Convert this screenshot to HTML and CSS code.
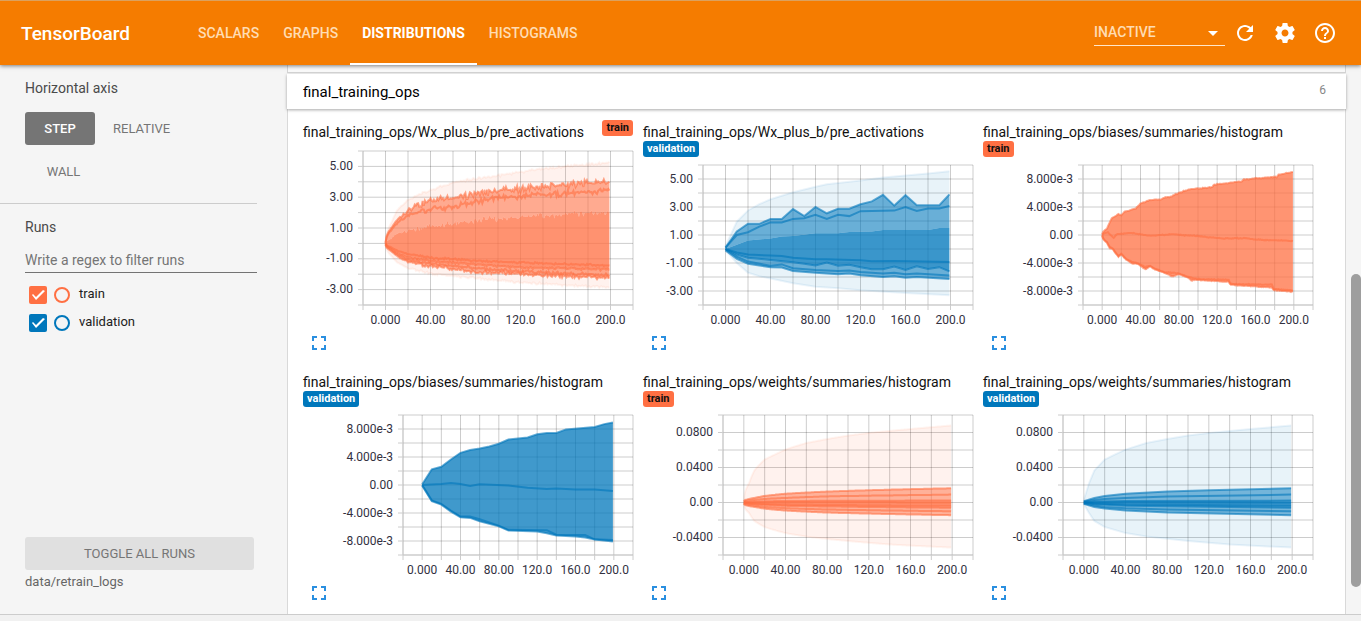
FILE: index.html
```html
<!DOCTYPE html>
<html lang="en">
<head>
<meta charset="utf-8">
<title>TensorBoard</title>
<link rel="stylesheet" href="styles.css">
</head>
<body>
<header class="toolbar">
  <h1 class="brand">TensorBoard</h1>
  <nav class="tabs">
    <a class="tab" href="#scalars">SCALARS</a>
    <a class="tab" href="#graphs">GRAPHS</a>
    <a class="tab active" href="#distributions">DISTRIBUTIONS</a>
    <a class="tab" href="#histograms">HISTOGRAMS</a>
  </nav>
  <div class="picker">
    <select class="picker-select" aria-label="Inactive dashboards"><option>INACTIVE</option></select>
    <svg class="picker-arrow" viewBox="0 0 10 5" aria-hidden="true"><path d="M0 0h10L5 5z"/></svg>
  </div>
  <button class="icon-button" aria-label="Reload"><svg viewBox="0 0 24 24"><path d="M17.65 6.35C16.2 4.9 14.21 4 12 4c-4.42 0-7.99 3.58-7.99 8s3.57 8 7.99 8c3.73 0 6.84-2.55 7.73-6h-2.08c-.82 2.33-3.04 4-5.65 4-3.31 0-6-2.69-6-6s2.69-6 6-6c1.66 0 3.14.69 4.22 1.78L13 11h7V4l-2.35 2.35z"/></svg></button>
  <button class="icon-button" aria-label="Settings"><svg viewBox="0 0 24 24"><path d="M19.43 12.98c.04-.32.07-.64.07-.98s-.03-.66-.07-.98l2.11-1.65c.19-.15.24-.42.12-.64l-2-3.46c-.12-.22-.39-.3-.61-.22l-2.49 1c-.52-.4-1.08-.73-1.69-.98l-.38-2.65C14.46 2.18 14.25 2 14 2h-4c-.25 0-.46.18-.49.42l-.38 2.65c-.61.25-1.17.59-1.69.98l-2.49-1c-.23-.09-.49 0-.61.22l-2 3.46c-.13.22-.07.49.12.64l2.11 1.65c-.04.32-.07.65-.07.98s.03.66.07.98l-2.11 1.65c-.19.15-.24.42-.12.64l2 3.46c.12.22.39.3.61.22l2.49-1c.52.4 1.08.73 1.69.98l.38 2.65c.03.24.24.42.49.42h4c.25 0 .46-.18.49-.42l.38-2.65c.61-.25 1.17-.59 1.69-.98l2.49 1c.23.09.49 0 .61-.22l2-3.46c.12-.22.07-.49-.12-.64l-2.11-1.65zM12 15.5c-1.93 0-3.5-1.57-3.5-3.5s1.57-3.5 3.5-3.5 3.5 1.57 3.5 3.5-1.57 3.5-3.5 3.5z"/></svg></button>
  <button class="icon-button" aria-label="Help"><svg viewBox="0 0 24 24"><path d="M11 18h2v-2h-2v2zm1-16C6.48 2 2 6.48 2 12s4.48 10 10 10 10-4.48 10-10S17.52 2 12 2zm0 18c-4.41 0-8-3.59-8-8s3.59-8 8-8 8 3.59 8 8-3.59 8-8 8zm0-14c-2.21 0-4 1.79-4 4h2c0-1.1.9-2 2-2s2 .9 2 2c0 2-3 1.75-3 5h2c0-2.25 3-2.5 3-5 0-2.21-1.79-4-4-4z"/></svg></button>
</header>
<div class="workspace">
  <aside class="sidebar">
    <section class="axis-section">
      <h2 class="side-title">Horizontal axis</h2>
      <div class="axis-buttons">
        <button class="axis-button selected">STEP</button>
        <button class="axis-button">RELATIVE</button>
        <button class="axis-button wide">WALL</button>
      </div>
    </section>
    <section class="runs-section">
      <h2 class="side-title">Runs</h2>
      <input class="run-filter" type="text" placeholder="Write a regex to filter runs" aria-label="Run filter">
      <div class="run train">
        <input class="run-check" type="checkbox" id="run-train" checked>
        <button class="run-dot" aria-label="Only train"></button>
        <label for="run-train">train</label>
      </div>
      <div class="run validation">
        <input class="run-check" type="checkbox" id="run-validation" checked>
        <button class="run-dot" aria-label="Only validation"></button>
        <label for="run-validation">validation</label>
      </div>
    </section>
    <footer class="side-footer">
      <button class="toggle-all">TOGGLE ALL RUNS</button>
      <div class="logdir">data/retrain_logs</div>
    </footer>
  </aside>
  <main class="center">
    <div class="previous-pane"></div>
    <section class="pane">
      <header class="pane-header"><h2 class="pane-title">final_training_ops</h2><span class="pane-count">6</span></header>
      <div class="cards" id="cards"></div>
    </section>
  </main>
  <div class="scroll-track"><div class="scroll-thumb"></div></div>
</div>
<script src="app.js"></script>
</body>
</html>
```

FILE: styles.css
```css
* { box-sizing: border-box; }
body {
  margin: 0;
  min-height: 100vh;
  display: flex;
  flex-direction: column;
  padding-bottom: 6px;
  background: #f1f1f1;
  font-family: Roboto, "Liberation Sans", sans-serif;
  font-size: 14px;
  color: #212121;
}
h1, h2 { margin: 0; font-weight: 400; }
button { font: inherit; border: 0; padding: 0; background: none; cursor: pointer; }

.toolbar {
  position: relative;
  z-index: 2;
  height: 65px;
  flex: none;
  display: flex;
  align-items: center;
  padding: 0 24px 0 21px;
  background: #f57c00;
  border-top: 1px solid #dba15e;
  box-shadow: 0 1px 4px rgba(0, 0, 0, .5);
  color: #fff;
}
.brand { width: 165px; font-size: 19px; font-weight: 500; }
.tabs { display: flex; align-self: stretch; margin-right: auto; }
.tab {
  display: flex;
  align-items: center;
  padding: 2px 12px 0;
  border-bottom: 2px solid transparent;
  color: #ffdcb3;
  font-weight: 500;
  text-decoration: none;
}
.tab.active { color: #fff; font-weight: 700; border-color: #fff; }
.picker { position: relative; margin-right: 8px; }
.picker-select {
  appearance: none;
  width: 131px;
  height: 26px;
  padding: 0 0 1px;
  border: 0;
  border-bottom: 1px solid #ffe6c9;
  border-radius: 0;
  background: none;
  color: #ffdcb3;
  font: 500 14px Roboto, sans-serif;
}
.picker-arrow { position: absolute; right: 7px; top: 11px; width: 10px; height: 5px; fill: #fff; }
.icon-button { width: 24px; height: 24px; margin-right: 16px; }
.icon-button:last-child { margin-right: 0; }
.icon-button svg { display: block; fill: #fff; }

.workspace { flex: 1; display: flex; border-bottom: 1px solid #ccc; background: #f5f5f5; }
.sidebar {
  width: 287px;
  flex: none;
  display: flex;
  flex-direction: column;
  padding: 15px 30px 24px 0;
}
.side-title { font-size: 14px; line-height: 16px; color: #4a4a4a; }
.axis-section { padding: 0 0 15px 25px; border-bottom: 1px solid #ccc; }
.axis-buttons { display: flex; flex-wrap: wrap; gap: 10px 4px; margin-top: 16px; }
.axis-button { height: 33px; min-width: 70px; padding: 0 14px; border-radius: 3px; color: #757575; font-size: 13px; }
.axis-button.selected { background: #757575; color: #fff; font-weight: 500; }
.axis-button.wide { min-width: 77px; }
.runs-section { padding: 15px 0 0 25px; }
.run-filter {
  display: block;
  width: 100%;
  height: 26px;
  margin: 12px 0 13px;
  padding: 0;
  border: 0;
  border-bottom: 1px solid #737373;
  background: none;
  font: 14px Roboto, sans-serif;
}
.run-filter::placeholder { color: #757575; opacity: 1; }
.run { display: flex; align-items: center; height: 18px; margin: 0 0 10px 4px; font-size: 13px; }
.train { --run: #ff7043; }
.validation { --run: #0077bb; }
.run-check { appearance: none; width: 18px; height: 18px; margin: 0; border-radius: 2px; background: var(--run); }
.run-check::before {
  content: "";
  display: block;
  width: 18px;
  height: 18px;
  background: #fff;
  clip-path: polygon(3px 9px, 4px 8px, 7px 11px, 14px 4px, 16px 5px, 7px 14px);
}
.run-dot { width: 16px; height: 16px; margin: 0 9px 0 7px; border: 2px solid var(--run); border-radius: 50%; }
.run label { line-height: 15px; padding-bottom: 3px; }
.side-footer { margin-top: auto; padding-left: 25px; }
.toggle-all { display: block; width: 229px; height: 33px; border-radius: 3px; background: #e0e0e0; color: #757575; font-size: 13px; }
.logdir { margin-top: 4px; font-size: 13px; line-height: 16px; color: #666; }

.center { flex: 1; min-width: 0; display: flex; flex-direction: column; }
.previous-pane { height: 8px; border: 1px solid #d5d5d5; border-top: 0; background: #fafafa; }
.pane { flex: 1; margin-top: 1px; background: #fff; border: solid #d9d9d9; border-width: 0 1px; }
.pane-header {
  display: flex;
  justify-content: space-between;
  height: 35px;
  margin: 0 -1px;
  padding: 0 20px 0 16px;
  background: #fff;
  box-shadow: 0 1px 3px rgba(0, 0, 0, .35);
  color: #000;
}
.pane-title { font-size: 15px; line-height: 36px; }
.pane-count { font-size: 12px; line-height: 32px; color: #888; }
.cards { display: grid; grid-template-columns: repeat(auto-fill, 330px); gap: 15px 10px; padding: 11px 15px 8px; }
.card { display: flex; flex-direction: column; }
.card-header { display: flex; flex-wrap: wrap; justify-content: space-between; align-items: flex-start; }
.card-title { padding-top: 3px; font-size: 14px; line-height: 18px; color: #111; }
.chip { padding: 0 4px; border-radius: 3px; background: var(--run); font-size: 11px; font-weight: 700; line-height: 16px; }
.train .chip { color: #111; }
.validation .chip { color: #fff; }
.chart { display: block; width: 330px; margin-top: auto; overflow: visible; }
.grid line { stroke: #000; stroke-opacity: .2; }
.axis line { stroke: #ccc; }
.axis text { font-size: 12px; fill: #32313f; }
.bands { fill: var(--run); }
.quantiles { fill: none; stroke: var(--run); stroke-width: 2; }
.expand { width: 24px; height: 24px; margin: 1px 0 0 4px; }
.expand svg { display: block; fill: #2a8fe0; }

.scroll-track { position: relative; width: 15px; flex: none; }
.scroll-thumb { position: absolute; right: 0; top: 38%; bottom: 5%; width: 10px; border-radius: 5px; background: #9e9e9e; }
```

FILE: app.js
```
// Each curve is a list of step, value pairs. Curves run from the highest quantile to the lowest.
const charts = [
  { tag: "Wx_plus_b/pre_activations", run: "train", left: 60, height: 154, lo: -4, hi: 6,
    labels: [[5, "5.00"], [3, "3.00"], [1, "1.00"], [-1, "-1.00"], [-3, "-3.00"]], step: 1, dense: true,
    noise: [.05, .15, .12, .15, .04, .05, .06, .08, .05],
    curves: [
      [0, .1, 5, 1.3, 10, 2.1, 20, 2.8, 30, 3.2, 40, 3.45, 60, 3.95, 80, 4.2, 100, 4.4, 120, 4.65, 160, 5, 199, 5.25],
      [0, .05, 5, 1, 10, 1.5, 20, 2.15, 30, 2.5, 40, 2.75, 60, 2.95, 80, 3.2, 100, 3.4, 120, 3.55, 160, 3.8, 199, 4],
      [0, 0, 5, .85, 10, 1.3, 20, 1.75, 30, 2.05, 40, 2.2, 60, 2.4, 80, 2.7, 100, 2.95, 120, 3.05, 160, 3.25, 199, 3.45],
      [0, 0, 5, .3, 10, .6, 20, .85, 40, 1.1, 60, 1.3, 80, 1.5, 100, 1.6, 120, 1.7, 160, 1.9, 199, 2.05],
      [0, 0, 5, -.25, 10, -.45, 20, -.7, 40, -.93, 80, -1.12, 120, -1.25, 199, -1.43],
      [0, 0, 5, -.35, 10, -.6, 20, -.9, 40, -1.15, 80, -1.35, 120, -1.55, 199, -1.7],
      [0, 0, 5, -.4, 10, -.7, 20, -1.05, 40, -1.3, 80, -1.6, 120, -1.82, 199, -2.05],
      [0, -.1, 5, -.5, 10, -.8, 20, -1.2, 40, -1.45, 80, -1.85, 120, -1.98, 199, -2.25],
      [0, -.1, 5, -.8, 10, -1.2, 20, -1.6, 40, -1.95, 80, -2.25, 120, -2.55, 199, -2.85]],
    bands: [[0, 8, .09], [1, 3, .55], [3, 5, .74], [5, 7, .6]], strong: [1, 2, 4, 5, 6, 7] },

  { tag: "Wx_plus_b/pre_activations", run: "validation", left: 60, height: 140, lo: -4, hi: 6,
    labels: [[5, "5.00"], [3, "3.00"], [1, "1.00"], [-1, "-1.00"], [-3, "-3.00"]], step: 1,
    curves: [
      [0, .2, 10, 1.95, 20, 2.75, 30, 3.2, 40, 3.55, 60, 4.05, 80, 4.45, 90, 4.62, 120, 4.9, 140, 5.1, 160, 5.25, 180, 5.4, 199, 5.55],
      [0, .1, 10, 1.25, 20, 1.8, 30, 1.8, 40, 2.15, 50, 2.15, 60, 2.85, 70, 2.35, 80, 3, 90, 2.55, 100, 2.87, 110, 2.87, 120, 3.2, 130, 3.4, 140, 3.87, 150, 3.1, 160, 3.85, 170, 3.13, 190, 3.13, 199, 3.9],
      [0, .1, 10, 1, 20, 1.2, 30, 1.6, 40, 1.9, 50, 1.9, 60, 2.15, 70, 2.2, 80, 2.45, 90, 2.15, 100, 2.45, 110, 2.35, 120, 2.7, 150, 2.74, 160, 3, 170, 2.72, 180, 2.9, 190, 2.9, 199, 3.07],
      [0, 0, 10, .3, 20, .6, 40, .75, 50, .9, 60, .93, 80, 1.13, 100, 1.13, 110, 1.22, 130, 1.25, 140, 1.35, 180, 1.35, 190, 1.5, 199, 1.5],
      [0, 0, 10, -.25, 20, -.4, 40, -.47, 50, -.5, 60, -.63, 80, -.73, 90, -.73, 120, -.8, 130, -.87, 150, -.85, 199, -.93],
      [0, 0, 10, -.4, 20, -.62, 40, -.78, 60, -.95, 70, -1.05, 80, -1.17, 90, -.97, 100, -1.2, 110, -1.13, 120, -1.3, 130, -1.45, 140, -1.45, 150, -1.25, 160, -1.5, 170, -1.23, 180, -1.43, 190, -1.3, 199, -1.6],
      [0, 0, 10, -.55, 20, -.9, 40, -1.2, 50, -1.1, 60, -1.38, 80, -1.5, 100, -1.57, 110, -1.53, 120, -1.65, 140, -1.75, 150, -1.7, 160, -1.8, 170, -1.75, 199, -1.9],
      [0, -.1, 10, -.7, 20, -1.05, 40, -1.3, 50, -1.33, 60, -1.57, 80, -1.7, 100, -1.8, 110, -1.75, 120, -1.87, 140, -2, 150, -1.95, 160, -2.05, 170, -2, 199, -2.15],
      [0, -.1, 10, -1, 20, -1.7, 30, -1.95, 40, -2.1, 60, -2.45, 80, -2.7, 100, -2.8, 120, -2.95, 160, -3.15, 199, -3.3]],
    bands: [[0, 8, .09], [1, 3, .55], [3, 5, .75], [5, 7, .55]], strong: [1, 2, 4, 5, 6, 7] },

  { tag: "biases/summaries/histogram", run: "train", left: 100, height: 140, lo: -10, hi: 10,
    labels: [[8, "8.000e-3"], [4, "4.000e-3"], [0, "0.00"], [-4, "-4.000e-3"], [-8, "-8.000e-3"]], step: 2, dense: true,
    noise: [.05, .04, .04, .04],
    curves: [
      [0, .1, 3, .7, 5, .9, 8, 1.8, 10, 2.4, 14, 2.7, 17, 3, 20, 2.8, 24, 3.4, 30, 3.6, 35, 3.8, 40, 4.5, 50, 5, 62, 5.1, 65, 5.4, 70, 5.4, 80, 6, 90, 6.5, 100, 6.65, 115, 6.85, 117, 7.2, 130, 7.4, 146, 7.7, 148, 7.9, 160, 8.1, 182, 8.3, 184, 8.6, 199, 9],
      [0, 0, 6, .4, 12, -.4, 15, .1, 30, .3, 40, .1, 50, -.1, 75, .1, 85, -.05, 95, -.1, 110, -.3, 125, -.5, 150, -.45, 160, -.65, 199, -.85],
      [0, 0, 5, -1, 8, -1.7, 11, -1.9, 14, -2.5, 17, -3, 20, -2.7, 25, -3.4, 32, -3.9, 37, -4, 45, -4.6, 50, -4.4, 55, -4.8, 65, -5.3, 80, -5.5, 93, -6.1, 100, -6.3, 132, -6.4, 134, -7, 177, -7.1, 179, -7.7, 199, -7.9],
      [0, -.1, 5, -1.1, 8, -1.9, 11, -2, 14, -2.6, 17, -3.1, 20, -2.8, 25, -3.5, 32, -4.1, 37, -4.1, 45, -4.9, 50, -4.5, 55, -4.9, 65, -5.4, 73, -5.9, 80, -5.6, 90, -6.1, 93, -6.5, 97, -6.4, 132, -6.7, 134, -7.1, 177, -7.5, 179, -7.9, 199, -8.1]],
    bands: [[0, 3, .75]], strong: [0, 1, 2, 3] },

  { tag: "biases/summaries/histogram", run: "validation", left: 100, height: 140, lo: -10, hi: 10,
    labels: [[8, "8.000e-3"], [4, "4.000e-3"], [0, "0.00"], [-4, "-4.000e-3"], [-8, "-8.000e-3"]], step: 2,
    curves: [
      [0, .1, 10, 2.25, 20, 2.6, 30, 3.65, 40, 4.6, 50, 5, 60, 5.2, 70, 5.5, 80, 5.9, 90, 6.5, 110, 6.8, 120, 7.25, 130, 7.45, 140, 7.45, 150, 7.95, 180, 8.3, 190, 8.7, 199, 8.95],
      [0, 0, 20, .15, 30, .3, 40, .15, 50, -.15, 60, .1, 90, -.05, 110, -.4, 130, -.55, 140, -.5, 160, -.65, 180, -.65, 199, -.85],
      [0, 0, 10, -2.2, 20, -2.7, 30, -3.65, 40, -4.5, 50, -4.5, 60, -4.9, 80, -5.8, 90, -6.4, 130, -6.45, 140, -7.1, 170, -7.15, 180, -7.75, 199, -7.85],
      [0, -.1, 10, -2.3, 20, -2.8, 30, -3.8, 40, -4.6, 50, -4.7, 60, -5.2, 80, -5.9, 90, -6.5, 120, -6.65, 130, -6.9, 140, -7.2, 160, -7.35, 170, -7.5, 180, -7.8, 199, -8.05]],
    bands: [[0, 3, .75]], strong: [0, 1, 2, 3] }
];

const weightCurves = [
  [0, .3, 5, 2.2, 10, 3.65, 20, 4.9, 30, 5.5, 40, 6.05, 60, 6.8, 80, 7.25, 100, 7.65, 120, 7.95, 160, 8.4, 199, 8.8],
  [0, .15, 10, .52, 20, .75, 40, 1.0, 80, 1.25, 120, 1.4, 199, 1.63],
  [0, .1, 10, .3, 20, .4, 40, .52, 80, .7, 199, .9],
  [0, 0, 10, .1, 40, .18, 199, .22],
  [0, 0, 199, -.02],
  [0, 0, 10, -.12, 40, -.24, 199, -.36],
  [0, 0, 10, -.2, 40, -.38, 199, -.6],
  [0, -.1, 10, -.35, 20, -.5, 40, -.65, 80, -.8, 199, -1],
  [0, -.15, 10, -.5, 20, -.7, 40, -.92, 80, -1.15, 199, -1.45],
  [0, -.2, 5, -1.2, 10, -2.1, 20, -2.8, 40, -3.5, 60, -3.9, 100, -4.4, 140, -4.8, 199, -5.15]];
for (const run of ["train", "validation"]) {
  charts.push({ tag: "weights/summaries/histogram", run, left: 80, height: 140, lo: -6, hi: 10,
    labels: [[8, "0.0800"], [4, "0.0400"], [0, "0.00"], [-4, "-0.0400"]], step: 2,
    dense: run === "train", noise: weightCurves.map(() => 0), curves: weightCurves,
    bands: [[0, 9, .09], [1, 8, .5], [3, 6, .4]], strong: [1, 2, 3, 4, 5, 6, 7, 8] });
}

let seed = 7;
const random = () => (seed = (seed * 16807) % 2147483647) / 2147483647;

// Adds one point per step, spaced evenly in the square root of the step.
function densify(flat, noise) {
  const out = [];
  for (let s = 0, i = 0; s <= 199; s++) {
    while (i + 2 < flat.length - 2 && flat[i + 2] < s) i += 2;
    const [x0, y0, x1, y1] = flat.slice(i, i + 4);
    const t = (Math.sqrt(s) - Math.sqrt(x0)) / (Math.sqrt(x1) - Math.sqrt(x0));
    const spike = Math.pow(random(), 2) * (random() < .5 ? -1 : 1);
    out.push([s, y0 + (y1 - y0) * t + spike * noise * Math.min(1, s / 30) * 1.6]);
  }
  return out;
}
function pairs(flat) {
  const out = [];
  for (let i = 0; i < flat.length; i += 2) out.push([flat[i], flat[i + 1]]);
  return out;
}

function drawChart(c) {
  const right = 330, top = 8, bottom = top + c.height;
  const X = v => c.left + (v + 20) / 240 * (right - c.left);
  const Y = v => top + (c.hi - v) / (c.hi - c.lo) * c.height;
  let grid = "", axis = "";
  for (let v = -20; v <= 220; v += 20) {
    const x = X(v);
    grid += `<line x1="${x}" x2="${x}" y1="${top}" y2="${bottom}"/>`;
    axis += `<line x1="${x}" x2="${x}" y1="${bottom}" y2="${bottom + 5}"/>`;
  }
  for (let v = c.lo; v <= c.hi; v += c.step) {
    const y = Y(v);
    grid += `<line x1="${c.left}" x2="${right}" y1="${y}" y2="${y}"/>`;
    axis += `<line x1="${c.left - 5}" x2="${c.left}" y1="${y}" y2="${y}"/>`;
  }
  axis += `<line x1="${c.left}" x2="${right}" y1="${bottom}" y2="${bottom}"/><line x1="${c.left}" x2="${c.left}" y1="${top}" y2="${bottom}"/>`;
  ["0.000", "40.00", "80.00", "120.0", "160.0", "200.0"].forEach((t, i) => {
    axis += `<text x="${X(i * 40)}" y="${bottom + 19}" text-anchor="middle">${t}</text>`;
  });
  for (const [v, t] of c.labels) axis += `<text x="${c.left - 10}" y="${Math.floor(Y(v)) + 4}" text-anchor="end">${t}</text>`;

  const curves = c.curves.map((f, i) => (c.dense ? densify(f, c.noise[i]) : pairs(f)).map(([s, v]) => X(s).toFixed(1) + "," + Y(v).toFixed(1)));
  const bands = c.bands.map(([a, b, o]) => `<path fill-opacity="${o}" d="M${curves[a].join("L")}L${[...curves[b]].reverse().join("L")}Z"/>`).join("");
  const lines = curves.map((p, i) => {
    const outer = c.curves.length > 4 && (i === 0 || i === curves.length - 1);
    const o = outer ? .08 : c.strong.includes(i) ? .6 : 0;
    return o ? `<path stroke-opacity="${o}" d="M${p.join("L")}"/>` : "";
  }).join("");
  return `<svg class="chart" height="${bottom + 25}" role="img" aria-label="${c.tag} ${c.run}"><g class="grid">${grid}</g><g class="axis">${axis}</g><g class="bands">${bands}</g><g class="quantiles">${lines}</g></svg>`;
}

document.getElementById("cards").innerHTML = charts.map(c => `
  <article class="card ${c.run}">
    <div class="card-header"><span class="card-title">final_training_ops/${c.tag}</span><span class="chip">${c.run}</span></div>
    ${drawChart(c)}
    <button class="expand" aria-label="Expand chart"><svg viewBox="0 0 24 24"><path d="M7 14H5v5h5v-2H7v-3zm-2-4h2V7h3V5H5v5zm12 7h-3v2h5v-5h-2v3zM14 5v2h3v3h2V5h-5z"/></svg></button>
  </article>`).join("");
```
